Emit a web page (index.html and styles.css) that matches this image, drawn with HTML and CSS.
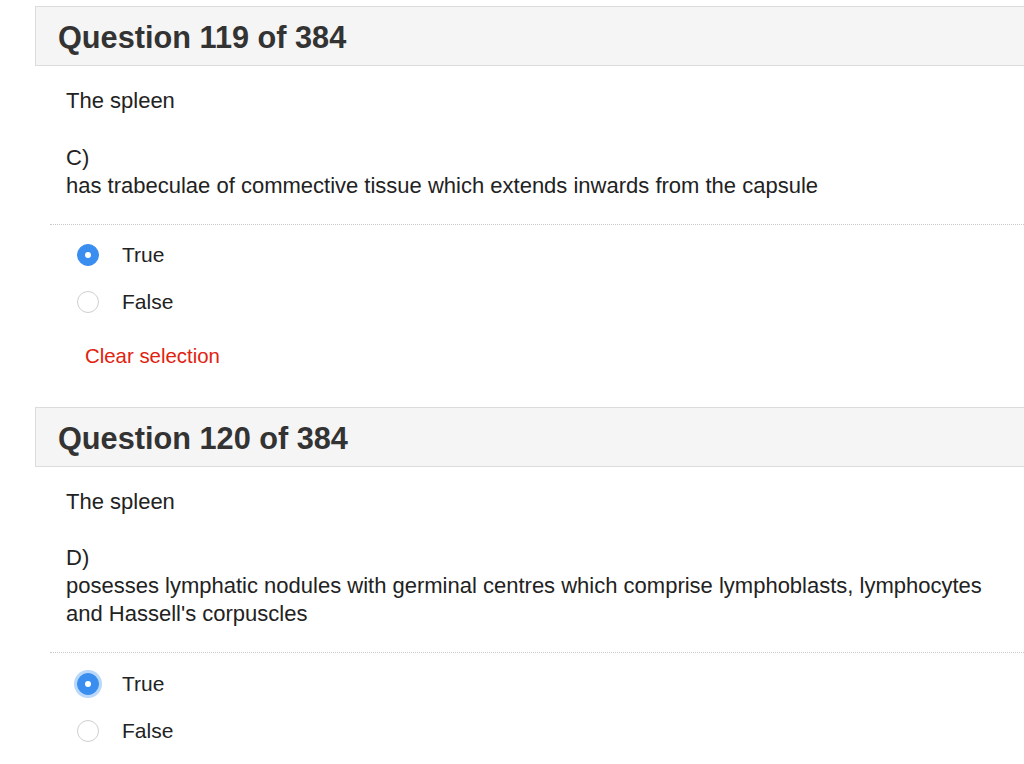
FILE: index.html
```html
<!DOCTYPE html>
<html>
<head>
<meta charset="utf-8">
<link rel="stylesheet" href="styles.css">
</head>
<body>
<div class="page">
  <section class="question">
    <div class="qhead"><h2>Question 119 of 384</h2></div>
    <div class="qtext">
      <p>The spleen</p>
      <p>C)<br>has trabeculae of commective tissue which extends inwards from the capsule</p>
    </div>
    <div class="answers">
      <label class="opt"><span class="radio checked"></span><span class="lbl">True</span></label>
      <label class="opt"><span class="radio"></span><span class="lbl">False</span></label>
      <a class="clear">Clear selection</a>
    </div>
  </section>
  <section class="question">
    <div class="qhead"><h2>Question 120 of 384</h2></div>
    <div class="qtext">
      <p>The spleen</p>
      <p>D)<br>posesses lymphatic nodules with germinal centres which comprise lymphoblasts, lymphocytes and Hassell's corpuscles</p>
    </div>
    <div class="answers">
      <label class="opt"><span class="radio checked focus"></span><span class="lbl">True</span></label>
      <label class="opt"><span class="radio"></span><span class="lbl">False</span></label>
    </div>
  </section>
</div>
</body>
</html>
```
FILE: styles.css
```css
html, body {
  margin: 0;
  padding: 0;
  background: #fff;
}
body {
  font-family: "Liberation Sans", Arial, Helvetica, sans-serif;
  color: #222;
  overflow: hidden;
}
.page {
  padding: 6px 0 0 35px;
}
.question {
  margin-bottom: 37px;
}
.qhead {
  background: #f5f5f5;
  border: 1px solid #dcdcdc;
  border-right: none;
  height: 58px;
}
.qhead h2 {
  margin: 0;
  padding-left: 22px;
  font-size: 30.7px;
  line-height: 62px;
  height: 58px;
  font-weight: bold;
  color: #333;
}
.qtext {
  padding: 21px 20px 0 31px;
  font-size: 22px;
  line-height: 28px;
}
.qtext p {
  margin: 0 0 28.5px;
}
.qtext p:last-child {
  margin-bottom: 0;
}
.answers {
  margin: 24px 0 0 15px;
  border-top: 1px dotted #c8c8c8;
  padding-top: 7px;
}
.opt {
  display: flex;
  align-items: center;
  height: 47px;
  padding-left: 27px;
  font-size: 21px;
  color: #222;
}
.radio {
  width: 20px;
  height: 20px;
  border: 1px solid #cfcfcf;
  border-radius: 50%;
  background: #fff;
  margin-right: 23px;
  flex: none;
  position: relative;
}
.radio.checked {
  background: #3a8eef;
  border-color: #3a8eef;
}
.radio.checked::after {
  content: "";
  position: absolute;
  left: 50%;
  top: 50%;
  width: 6px;
  height: 6px;
  margin: -3px 0 0 -3px;
  border-radius: 50%;
  background: #fff;
}
.radio.focus {
  box-shadow: 0 0 0 3px rgba(58, 142, 239, 0.35);
}
.clear {
  display: block;
  margin: 16px 0 0 35px;
  font-size: 20.4px;
  line-height: 28px;
  color: #e2210e;
}
```
